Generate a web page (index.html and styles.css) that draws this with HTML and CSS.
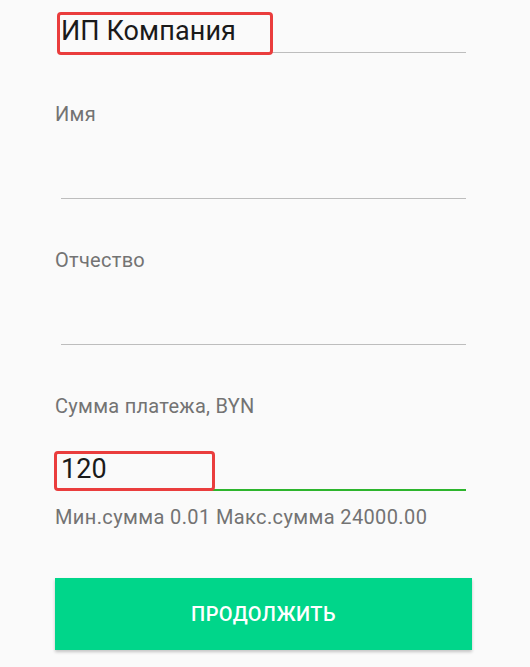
FILE: index.html
```html
<!DOCTYPE html>
<html lang="ru">
<head>
<meta charset="utf-8">
<link rel="stylesheet" href="styles.css">
</head>
<body>
<div class="form">
  <div class="field first">
    <div class="input">
      <div class="value">ИП Компания<span class="mark mark-name"></span></div>
    </div>
  </div>
  <div class="field">
    <div class="label">Имя</div>
    <div class="input"><div class="value"></div></div>
  </div>
  <div class="field">
    <div class="label">Отчество</div>
    <div class="input"><div class="value"></div></div>
  </div>
  <div class="field">
    <div class="label">Сумма платежа, BYN</div>
    <div class="input active">
      <div class="value">120<span class="mark mark-sum"></span></div>
    </div>
    <div class="helper">Мин.сумма 0.01 Макс.сумма 24000.00</div>
  </div>
  <button class="btn">ПРОДОЛЖИТЬ</button>
</div>
</body>
</html>
```
FILE: styles.css
```css
html, body {
  margin: 0;
  padding: 0;
  background: #fafafa;
}
body {
  font-family: Roboto, "Noto Sans", sans-serif;
  width: 530px;
  height: 667px;
  overflow: hidden;
}
.form {
  margin-left: 55px;
  width: 417px;
  display: flex;
  flex-direction: column;
}
.field {
  display: flex;
  flex-direction: column;
  margin-top: 50px;
}
.field.first {
  margin-top: 15px;
}
.label {
  font-size: 20px;
  line-height: 22px;
  letter-spacing: 0.28px;
  color: #737373;
}
.input {
  margin: 0 6px;
  padding-top: 36px;
  padding-bottom: 5px;
  border-bottom: 1px solid #bdbdbd;
}
.field.first .input {
  padding-top: 0;
}
.input.active {
  padding-bottom: 4px;
  border-bottom: 2px solid #2db52d;
}
.value {
  position: relative;
  height: 32px;
  font-size: 27px;
  line-height: 32px;
  letter-spacing: 0.1px;
  color: #1a1a1a;
}
.mark {
  position: absolute;
  border: 3px solid #ea3d3d;
  border-radius: 4px;
  box-sizing: border-box;
}
.mark-name {
  left: -4px;
  top: -3px;
  width: 216px;
  height: 43px;
}
.mark-sum {
  left: -7px;
  top: -2px;
  width: 161px;
  height: 40px;
}
.helper {
  margin-top: 15px;
  font-size: 20px;
  line-height: 22px;
  letter-spacing: 0.38px;
  color: #737373;
}
.btn {
  margin-top: 50px;
  height: 72px;
  border: none;
  background: #00d68a;
  color: #ffffff;
  font-family: Roboto, "Noto Sans", sans-serif;
  font-weight: 500;
  font-size: 20px;
  letter-spacing: 0.4px;
  box-shadow: 0 2px 3px rgba(0, 0, 0, 0.22);
  padding: 0;
}
```
